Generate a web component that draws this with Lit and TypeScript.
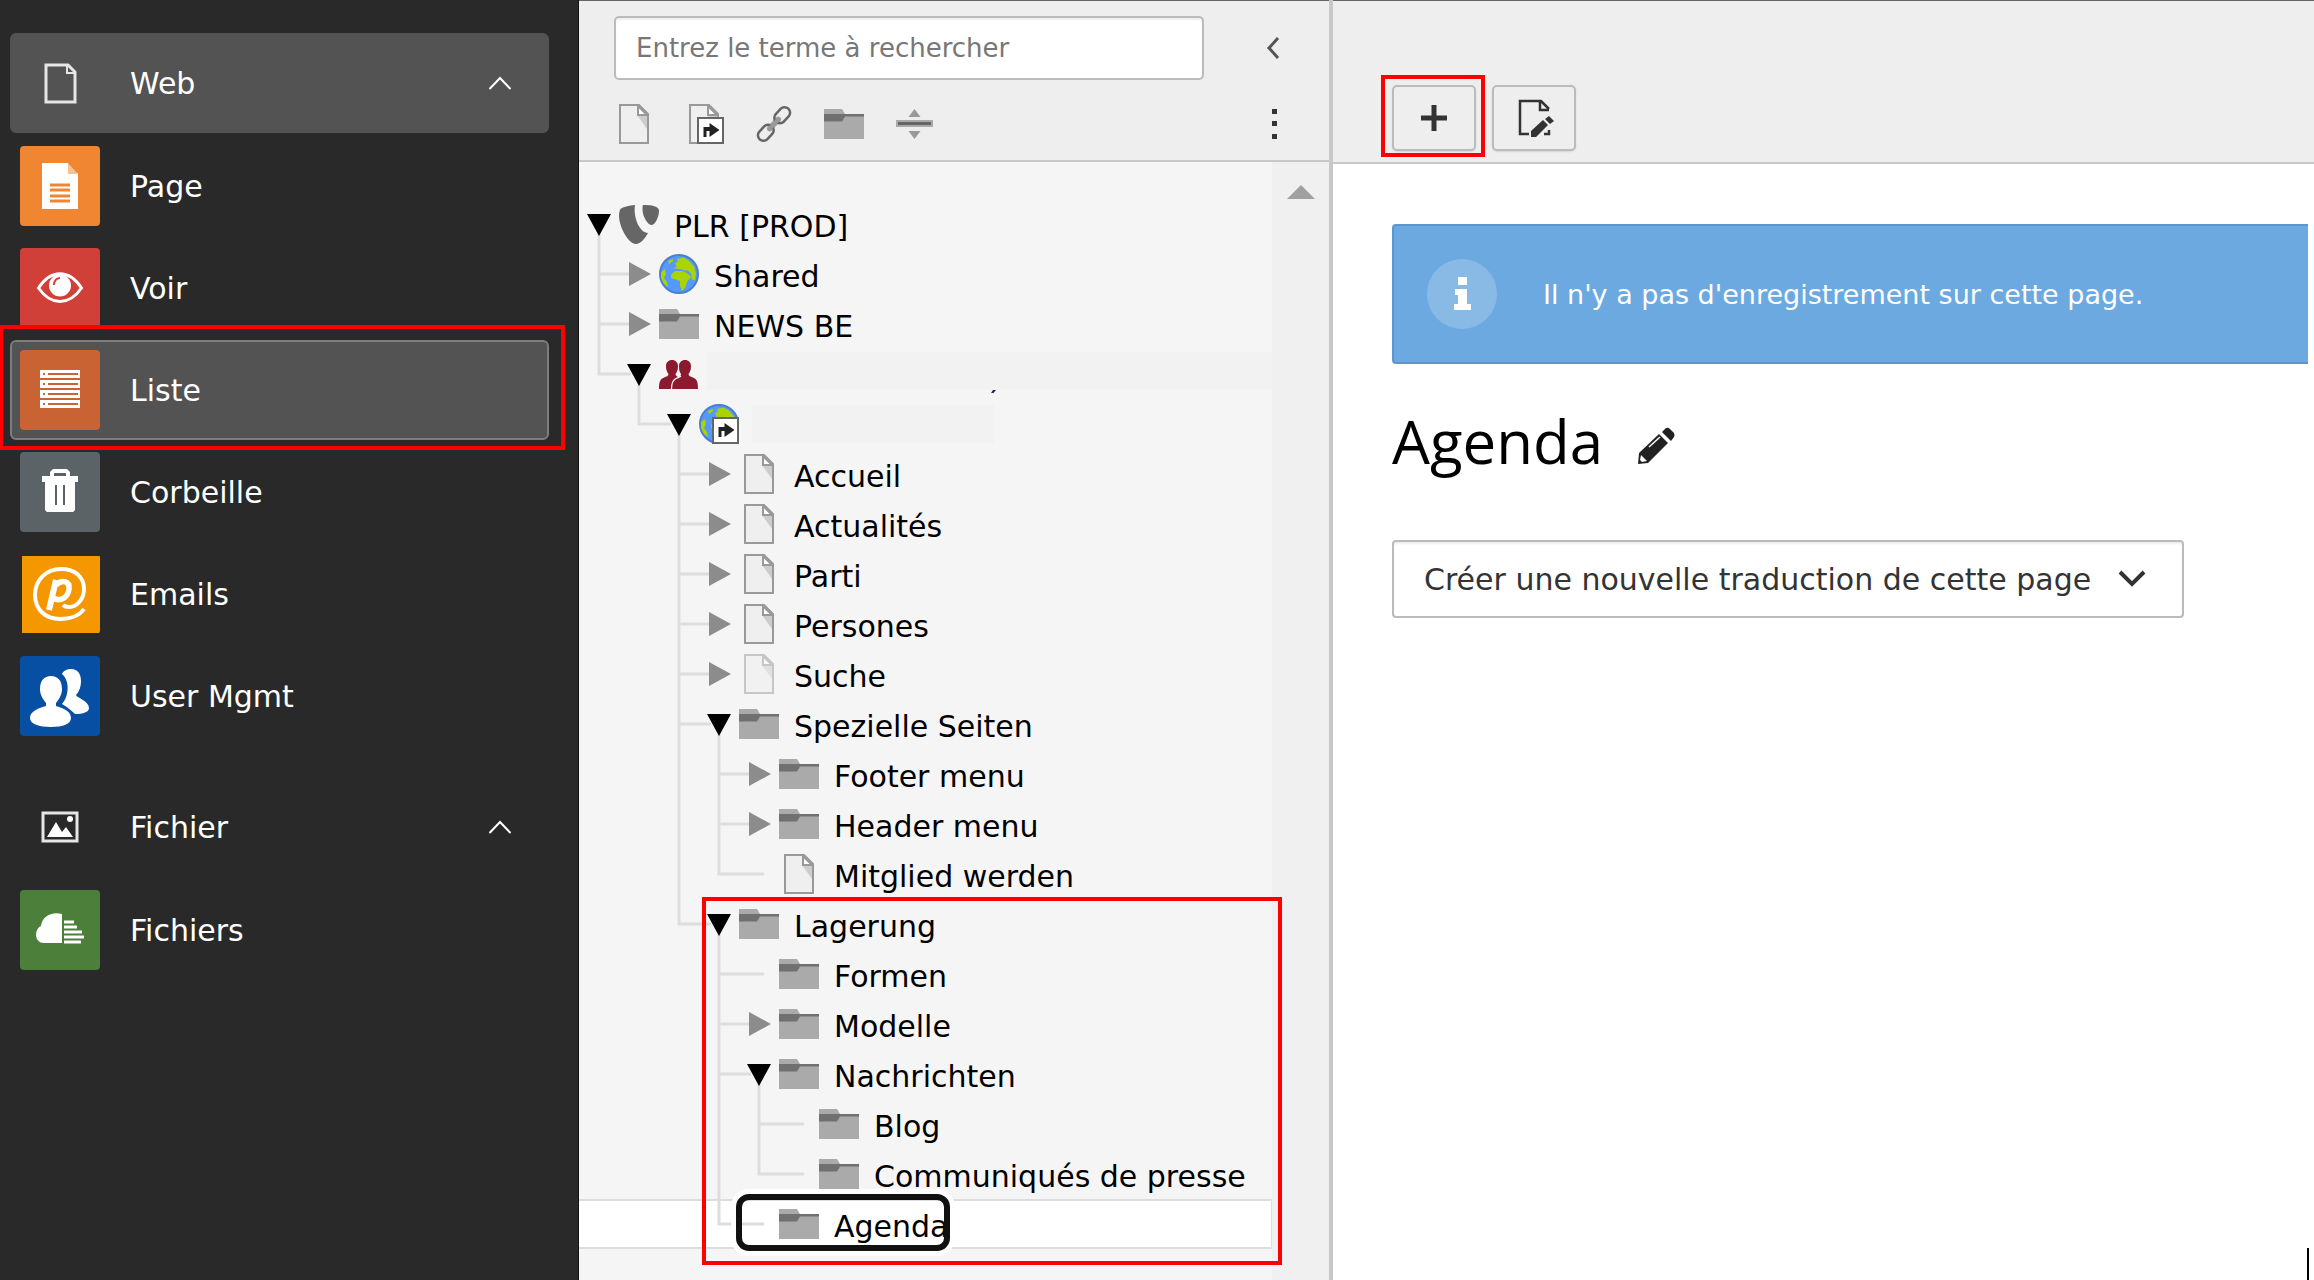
import { LitElement, html, css, svg, nothing } from "lit";
import { customElement } from "lit/decorators.js";

type IconName =
  | "typo3" | "globe" | "globeLink" | "folder" | "users" | "page" | "pageHidden"
  | "pageLink" | "link" | "divider";

interface TreeNode {
  label: string;
  icon: IconName;
  open?: boolean;
  children?: TreeNode[];
  masked?: "wide" | "short";
  selected?: boolean;
  marked?: boolean;
}

interface ModuleItem {
  label: string;
  color: string;
  icon: unknown;
  active?: boolean;
  inset?: boolean;
}

const pageShape = svg`
  <path d="M6 1h19l9 9v29H6z" fill="#efefef" stroke="#999" stroke-width="2"/>
  <path d="M23 11l10 14V11z" fill="#ccc"/>
  <path d="M24 2v9h9z" fill="#fff" stroke="#999" stroke-width="2"/>`;

const globeShape = svg`
  <circle cx="20" cy="20" r="19" fill="#5599ff" stroke="#4a7fd0" stroke-width="2"/>
  <path d="M18 5l6-1.500 6 3 5 6 2 7-1 7-3-1-1-6-3-3-4 0-3-3-4 0-2-4 3-2z" fill="#aad400"/>
  <path d="M12 21l4-4 7 0 5 2 4 4-4 5-2 6-3 3-2-5 0-5-6-2-3-1z" fill="#aad400"/>
  <path d="M2 18l4-3 1 5-2 4 3 4 1 5-4-3-3-6zM9 7l5-2 0 2-4 3z" fill="#aad400"/>
  <path d="M14 14l6-2 6 2-1 2z" fill="#aad400"/>`;

const shortcut = svg`
  <rect x="14" y="14" width="25" height="25" fill="#fff" stroke="#666" stroke-width="2"/>
  <path d="M19.500 33v-10h6v-4l10 7-10 7v-6h-3v6z" fill="#222"/>`;

const ICONS: Record<IconName, unknown> = {
  typo3: svg`<path d="M16 1C10 1.500 4 3 1.500 5 .5 6.500 0 9 0 12c0 10 9 28 17 28 4 0 8-4 12-11-8 0-15-15-13-28z" fill="#666"/>
    <path d="M24 1c9 0 16 1 16 6 0 6-4 14-7.500 14S23.500 13 23.500 5c0-2 0-3 .5-4z" fill="#666"/>`,
  globe: globeShape,
  globeLink: svg`${globeShape}${shortcut}`,
  folder: svg`<path d="M0 5h18l3 5h19v25H0z" fill="#aaa"/><path d="M0 10h40v2.500H21l-3 5H0z" fill="#707070"/>`,
  users: svg`<path d="M13 6c3.500 0 6 2.500 6 6 0 4-1 6-2.500 8 0 2 3 3 5 4.500 2 2 3 6 3 10.500H0c0-7 1-10 5-11.500 2.500-1 4.500-1.500 4.500-3.500C8 18 7 16 7 12c0-3.500 2.500-6 6-6z" fill="#8c1a2e"/>
    <path d="M26 6c3.500 0 6 2.500 6 6 0 4-1 6-2.500 8 0 2 2 2.500 4.500 3.500 4 1.500 5 4.500 5 11.500H12.500c0-5 1-8.500 3.500-10 2.500-1.500 6-2 6-5-1.500-2-2-4-2-8 0-3.500 2.500-6 6-6z" fill="#8c1a2e"/>
    <path d="M12.500 35c0-6 1.500-9 4.500-10.500 2-1 4-1.500 5-2.500" fill="none" stroke="#f5f5f5" stroke-width="1.300"/>`,
  page: pageShape,
  pageHidden: svg`<g opacity=".5">${pageShape}</g>`,
  pageLink: svg`${pageShape}${shortcut}`,
  link: svg`<g transform="rotate(43 20 20)" fill="none">
    <path d="M20 14v12" stroke="#aaa" stroke-width="6" stroke-linecap="round"/>
    <rect x="14.500" y="-1" width="11" height="18" rx="5.500" stroke="#666" stroke-width="2.500"/>
    <rect x="14.500" y="23" width="11" height="18" rx="5.500" stroke="#666" stroke-width="2.500"/>
    <path d="M20 13v14" stroke="#999" stroke-width="4" stroke-linecap="round"/></g>`,
  divider: svg`<path d="M2 16h37v7H2z" fill="#aaa"/><path d="M4 18h33v3H4z" fill="#666"/>
    <path d="M20.500 5l6 8h-12zM20.500 35l6-8h-12z" fill="#999"/>`,
};

const icon = (name: IconName) => html`<svg class="icon" viewBox="0 0 40 40" aria-hidden="true">${ICONS[name]}</svg>`;

const WEB_MODULES: ModuleItem[] = [
  {
    label: "Page", color: "#f08532",
    icon: svg`<path d="M22 17h26v10h10v36H22z" fill="#fff"/><path d="M48 17l10 11H48z" fill="#f7c196"/>
      <path d="M30 39h20M30 44h20M30 50h20M30 55h20" stroke="#f08532" stroke-width="3"/>`,
  },
  {
    label: "Voir", color: "#d13f39",
    icon: svg`<path d="M18.500 40C31 21 49 21 61.500 40 49 58 31 58 18.500 40z" fill="none" stroke="#fff" stroke-width="3"/>
      <circle cx="40" cy="37.500" r="11" fill="#fff"/>
      <path d="M34 37c0-4 2-6.500 6-7" fill="none" stroke="#d13f39" stroke-width="2"/>`,
  },
  {
    label: "Liste", color: "#c96333", active: true,
    icon: svg`${[20, 30, 40, 50].map((y) => svg`<rect x="20" y=${y} width="40" height="8" fill="#fff"/>
      <rect x="23" y=${y + 3} width="2" height="2" fill="#c96333"/><rect x="28" y=${y + 3} width="30" height="2" fill="#c96333"/>`)}`,
  },
  {
    label: "Corbeille", color: "#5c6366",
    icon: svg`<path d="M22 24h8v-4l3-3h14l3 3v4h8v6h-3v28l-2 2H27l-2-2V30h-3zM34 24h12v-3H34z" fill="#fff" fill-rule="evenodd"/>
      <path d="M36 33v20M44 33v20" stroke="#5c6366" stroke-width="2"/>`,
  },
  {
    label: "Emails", color: "#f49700", inset: true,
    icon: svg`<path d="M64 55C60 61 51 65 40 65 25 65 15 55 15 41 15 26 26 15 41 15c14 0 23 8 23 20 0 10-7 18-15 18-3 0-5-1-6-2" fill="none" stroke="#fff" stroke-width="4"/>
      <path d="M36 26l-7 30" stroke="#fff" stroke-width="6"/>
      <path d="M36 31c6-6 14-4 13 4-1 9-9 13-16 9" fill="none" stroke="#fff" stroke-width="5.500"/>`,
  },
  {
    label: "User Mgmt", color: "#074fa3",
    icon: svg`<path d="M42 18c1-3 5-5 9-5 7 0 10 5 10 12 0 6-2 11-5 14 1 3 13 6 13 13 0 4-6 6-14 6-3-3-9-8-13-10 6-6 9-22 0-30z" fill="#fff"/>
      <path d="M31 20c7 0 11 5 11 13 0 6-3 10-6 14v3c5 2 15 4 15 12 0 6-8 9-20 9S10 68 10 62c0-7 9-10 16-12v-3c-3-4-6-8-6-14 0-8 4-13 11-13z" fill="#fff"/>`,
  },
];

const FILE_MODULES: ModuleItem[] = [
  {
    label: "Fichiers", color: "#4b7f3a",
    icon: svg`<path d="M42 24c-10-3-20 2-21 12-7 3-7 17 3 17h18z" fill="#fff"/>
      <path d="M44 32h10M44 37h13M44 42h18M44 47h20M44 52h17" stroke="#fff" stroke-width="3"/>`,
  },
];

const TREE: TreeNode[] = [
  {
    label: "PLR [PROD]", icon: "typo3", open: true, children: [
      { label: "Shared", icon: "globe", children: [] },
      { label: "NEWS BE", icon: "folder", children: [] },
      {
        label: "", icon: "users", open: true, masked: "wide", children: [
          {
            label: "", icon: "globeLink", open: true, masked: "short", children: [
              { label: "Accueil", icon: "page", children: [] },
              { label: "Actualités", icon: "page", children: [] },
              { label: "Parti", icon: "page", children: [] },
              { label: "Persones", icon: "page", children: [] },
              { label: "Suche", icon: "pageHidden", children: [] },
              {
                label: "Spezielle Seiten", icon: "folder", open: true, children: [
                  { label: "Footer menu", icon: "folder", children: [] },
                  { label: "Header menu", icon: "folder", children: [] },
                  { label: "Mitglied werden", icon: "page" },
                ],
              },
              {
                label: "Lagerung", icon: "folder", open: true, marked: true, children: [
                  { label: "Formen", icon: "folder" },
                  { label: "Modelle", icon: "folder", children: [] },
                  {
                    label: "Nachrichten", icon: "folder", open: true, children: [
                      { label: "Blog", icon: "folder" },
                      { label: "Communiqués de presse", icon: "folder" },
                    ],
                  },
                  { label: "Agenda", icon: "folder", selected: true },
                ],
              },
            ],
          },
        ],
      },
    ],
  },
];

@customElement("module-menu")
export class ModuleMenu extends LitElement {
  static styles = css`
    :host { display: block; background: #292929; border-right: 1px solid #111; }
    nav { padding: 33px 29px 0 10px; }
    .group + .group { margin-top: 31px; }
    ul { list-style: none; margin: 3px 0 0; padding: 0; display: flex; flex-direction: column; gap: 2px; }
    li { position: relative; }
    .row {
      box-sizing: border-box; width: 100%; height: 100px; padding: 0 35px 0 8px;
      display: flex; align-items: center; gap: 30px;
      border: 2px solid transparent; border-radius: 6px; background: none;
      color: #fff; font: 30px "DejaVu Sans", sans-serif; text-decoration: none; text-align: left;
    }
    .row.current { background: #535353; border-color: #535353; }
    .row.active { background: #535353; border-color: #7d7d7d; }
    .tile { width: 80px; height: 80px; flex: none; border-radius: 4px; }
    .label { flex: 1; }
    .caret { width: 24px; height: 16px; flex: none; }
    .marker { position: absolute; inset: -15px -16px -10px -11px; border: 4px solid #f00; pointer-events: none; }
  `;

  private group(label: string, glyph: unknown, items: ModuleItem[], current: boolean) {
    return html`
      <div class="group">
        <button class="row ${current ? "current" : ""}" aria-expanded="true">
          <svg class="tile" viewBox="0 0 80 80" aria-hidden="true">${glyph}</svg>
          <span class="label">${label}</span>
          <svg class="caret" viewBox="0 0 24 16" aria-hidden="true">
            <path d="M1.500 14L12 3l10.500 11" fill="none" stroke="#fff" stroke-width="2"/>
          </svg>
        </button>
        <ul>
          ${items.map((m) => html`
            <li>
              <a class="row ${m.active ? "active" : ""}" href="#">
                <svg class="tile" viewBox="0 0 80 80" aria-hidden="true">
                  ${m.inset
                    ? svg`<rect x="2" y="2" width="78" height="77" fill=${m.color}/>`
                    : svg`<rect width="80" height="80" fill=${m.color}/>`}${m.icon}
                </svg>
                <span class="label">${m.label}</span>
              </a>
              ${m.active ? html`<div class="marker"></div>` : nothing}
            </li>`)}
        </ul>
      </div>`;
  }

  render() {
    return html`
      <nav aria-label="Modules">
        ${this.group("Web", svg`<path d="M26 22h22l7 7v30H26z" fill="none" stroke="#e6e6e6" stroke-width="3"/>
          <path d="M47 22v8h8" fill="none" stroke="#e6e6e6" stroke-width="2"/>`, WEB_MODULES, true)}
        ${this.group("Fichier", svg`<rect x="23" y="26" width="34" height="28" fill="none" stroke="#e6e6e6" stroke-width="3"/>
          <path d="M27 50l9-15 6 10 4-5 7 10z" fill="#fff"/><circle cx="50" cy="32" r="3" fill="#fff"/>`, FILE_MODULES, false)}
      </nav>`;
  }
}

@customElement("page-tree")
export class PageTree extends LitElement {
  static styles = css`
    :host {
      display: flex; flex-direction: column; background: #f5f5f5;
      border-right: 4px solid #c8c8c8; font-family: "DejaVu Sans", sans-serif; color: #000;
    }
    .head { background: #eee; border-bottom: 2px solid #c8c8c8; padding: 16px 36px 16px 35px; box-shadow: inset 0 1px #666; }
    .line { display: flex; align-items: center; justify-content: space-between; }
    .search {
      box-sizing: border-box; width: 590px; height: 64px; padding: 0 20px;
      border: 2px solid #bbb; border-radius: 5px; background: #fff;
      box-shadow: inset 0 2px 2px rgba(0, 0, 0, 0.07); font: 26px "DejaVu Sans", sans-serif; color: #333;
    }
    .search::placeholder { color: #777; opacity: 1; }
    .plain { display: flex; padding: 0; border: 0; background: none; }
    .tools { display: flex; gap: 30px; margin-top: 24px; }
    .icon { width: 40px; height: 40px; flex: none; display: block; overflow: visible; }
    .body { flex: 1; display: flex; }
    .tree { flex: 1; min-width: 0; padding-top: 37px; }
    .scroll { width: 57px; background: #f0f0f0; display: flex; justify-content: center; padding-top: 23px; }
    .scroll svg { width: 28px; height: 14px; }
    .branch { position: relative; }
    .node { position: relative; height: 50px; display: flex; align-items: center; }
    .selected { background: #fff; box-shadow: inset 0 2px #ddd, inset 0 -2px #ddd, inset -1px 0 #ddd; }
    .cell { width: 40px; height: 50px; flex: none; display: block; }
    .label { margin-left: 15px; padding-top: 6px; font-size: 30px; line-height: 40px; white-space: nowrap; color: #000; text-decoration: none; }
    .mask { background: #f2f2f2; height: 38px; margin-left: 13px; }
    .mask.wide { position: relative; flex: 1; margin-left: 8px; margin-bottom: 6px; }
    .mask.short { width: 242px; }
    .speck { position: absolute; left: 284px; top: 38px; width: 5px; height: 3px; }
    .marker { position: absolute; inset: -2px -10px -16px 123px; border: 4px solid #f00; pointer-events: none; }
    .ring {
      position: absolute; left: 157px; top: -5px; width: 202px; height: 45px;
      border: 6px solid #111; border-radius: 13px; box-shadow: 0 0 0 5px #fff; pointer-events: none;
    }
  `;

  private renderNodes(nodes: TreeNode[], trail: boolean[]): unknown {
    return nodes.map((n, i) => this.renderNode(n, trail, i === nodes.length - 1));
  }

  private renderMask(kind: "wide" | "short") {
    return html`<span class="mask ${kind}">${kind === "wide"
      ? html`<svg class="speck" viewBox="0 0 5 3" aria-hidden="true"><path d="M2 0h3L2.500 3H0z" fill="#1b2a55"/></svg>`
      : nothing}</span>`;
  }

  private renderNode(n: TreeNode, trail: boolean[], last: boolean): unknown {
    const depth = trail.length;
    const toggle = n.children
      ? n.open
        ? svg`<path d="M20 25v25" stroke="#ddd" stroke-width="3"/><path d="M8 15h24L20 37z" fill="#000"/>`
        : svg`<path d="M10 13v24l22-12z" fill="#8c8c8c"/>`
      : nothing;
    const reach = n.children ? 12 : 25;
    const row = html`
      <div class="node ${n.selected ? "selected" : ""}" role="treeitem" aria-selected=${n.selected ? "true" : "false"}>
        ${trail.map((on, i) => {
          const own = i === depth - 1;
          const d = own ? (last ? "M20 0v25h20" : "M20 0v50M20 25h20") : on ? "M20 0v50" : "";
          return html`<svg class="cell" viewBox="0 0 40 50"><path d=${d} fill="none" stroke="#ddd" stroke-width="3"/></svg>`;
        })}
        <svg class="cell" viewBox="0 0 40 50">
          ${depth ? svg`<path d="M0 25h${reach}" stroke="#ddd" stroke-width="3"/>` : nothing}${toggle}
        </svg>
        ${icon(n.icon)}
        ${n.masked ? this.renderMask(n.masked) : html`<a class="label" href="#">${n.label}</a>`}
        ${n.selected ? html`<span class="ring"></span>` : nothing}
      </div>`;
    const childTrail = depth === 0 ? [true] : [...trail.slice(0, -1), !last, true];
    const kids = n.children?.length ? this.renderNodes(n.children, childTrail) : nothing;
    return n.marked
      ? html`<div class="branch">${row}${kids}<div class="marker"></div></div>`
      : html`${row}${kids}`;
  }

  render() {
    const tools: [IconName, string][] = [
      ["page", "Page"], ["pageLink", "Raccourci"], ["link", "Lien"], ["folder", "Dossier"], ["divider", "Séparateur"],
    ];
    return html`
      <div class="head">
        <div class="line">
          <input class="search" type="search" aria-label="Entrez le terme à rechercher" placeholder="Entrez le terme à rechercher">
          <button class="plain" aria-label="Replier">
            <svg class="icon" viewBox="0 0 40 40"><path d="M25 10l-9 10 9 10" fill="none" stroke="#555" stroke-width="3"/></svg>
          </button>
        </div>
        <div class="line">
          <div class="tools">
            ${tools.map(([name, label]) => html`<button class="plain" aria-label=${label}>${icon(name)}</button>`)}
          </div>
          <button class="plain tools" aria-label="Options">
            <svg class="icon" viewBox="0 0 40 40"><path d="M19 5h5v5h-5zM19 17h5v5h-5zM19 30h5v5h-5z" fill="#333"/></svg>
          </button>
        </div>
      </div>
      <div class="body">
        <div class="tree" role="tree">${this.renderNodes(TREE, [])}</div>
        <div class="scroll"><svg viewBox="0 0 28 14"><path d="M14 0l14 14H0z" fill="#a0a0a0"/></svg></div>
      </div>`;
  }
}

@customElement("record-list")
export class RecordList extends LitElement {
  static styles = css`
    :host { display: block; position: relative; background: #fff; font-family: "DejaVu Sans", sans-serif; min-width: 0; }
    .head {
      box-sizing: border-box; height: 164px; background: #eee; border-bottom: 2px solid #c8c8c8;
      padding: 0 59px 11px; display: flex; align-items: flex-end; gap: 16px; box-shadow: inset 0 1px #666;
    }
    .slot { position: relative; display: flex; }
    .btn {
      box-sizing: border-box; width: 84px; height: 66px; padding: 0; border: 2px solid #bbb; border-radius: 5px;
      background: #eee; display: flex; align-items: center; justify-content: center;
      box-shadow: 0 1px 2px rgba(0, 0, 0, 0.1);
    }
    .btn svg { width: 40px; height: 40px; }
    .marker { position: absolute; inset: -10px -9px -6px -11px; border: 4px solid #f00; pointer-events: none; }
    .content { padding: 60px 6px 0 59px; }
    .info {
      box-sizing: border-box; height: 140px; padding-left: 33px; display: flex; align-items: center; gap: 46px;
      background: #6ca9e0; border: 2px solid #5a97cf; border-right: 0; border-radius: 4px 0 0 4px; color: #fff;
    }
    .info svg { width: 70px; height: 70px; flex: none; }
    .info p { margin: 0; font-size: 27px; }
    .title { display: flex; align-items: center; gap: 34px; margin: 36px 0 58px; }
    h1 { margin: 0; font: 60px/82px "Open Sans", sans-serif; color: #000; }
    .edit { display: flex; padding: 10px 0 0; border: 0; background: none; }
    .edit svg { width: 38px; height: 38px; }
    .pick { position: relative; display: inline-flex; align-items: center; }
    select {
      appearance: none; box-sizing: border-box; height: 78px; padding: 0 90px 0 30px; border: 2px solid #bbb; border-radius: 4px;
      background: #fff; color: #333; font: 30px "DejaVu Sans", sans-serif;
      box-shadow: inset 0 2px 2px rgba(0, 0, 0, 0.07);
    }
    .arrow { position: absolute; right: 38px; width: 28px; height: 20px; pointer-events: none; }
    .edge { position: absolute; right: 5px; bottom: 0; width: 2px; height: 32px; background: #000; }
  `;

  render() {
    return html`
      <div class="head">
        <div class="slot">
          <button class="btn" aria-label="Créer">
            <svg viewBox="0 0 40 40"><path d="M20 7v26M7 20h26" stroke="#333" stroke-width="5"/></svg>
          </button>
          <div class="marker"></div>
        </div>
        <button class="btn" aria-label="Modifier la page">
          <svg viewBox="0 0 40 40">
            <path d="M15 36H6V3h21l8 8M30 36h5v-4" fill="none" stroke="#333" stroke-width="2.500"/>
            <path d="M26 3v9h9" fill="none" stroke="#333" stroke-width="2.500"/>
            <path d="M17 39v-6l12-11 5 5-12 12zM31 21l4-3 5 5-4 3z" fill="#333"/>
          </svg>
        </button>
      </div>
      <div class="content">
        <div class="info" role="status">
          <svg viewBox="0 0 70 70" aria-hidden="true">
            <circle cx="35" cy="35" r="35" fill="#fff" opacity=".2"/>
            <path d="M31 18h9v8h-9zM28 30h12v15h4v6H27v-6h4v-9h-3z" fill="#fff"/>
          </svg>
          <p>Il n'y a pas d'enregistrement sur cette page.</p>
        </div>
        <div class="title">
          <h1>Agenda</h1>
          <button class="edit" aria-label="Modifier le titre">
            <svg viewBox="0 0 38 38">
              <path d="M1 37l1-11L22 7l9 9-20 20zM25 5l4-4q2-1 4 1l4 4q1 2 0 4l-3 4z" fill="#222"/>
              <path d="M4 28l6 6-5 1-2-2z" fill="#fff"/>
              <path d="M12 20L23 10" stroke="#fff" stroke-width="1.500"/>
            </svg>
          </button>
        </div>
        <div class="pick">
          <select aria-label="Créer une nouvelle traduction de cette page">
            <option>Créer une nouvelle traduction de cette page</option>
          </select>
          <svg class="arrow" viewBox="0 0 28 20" aria-hidden="true">
            <path d="M2 3l12 12L26 3" fill="none" stroke="#333" stroke-width="4"/>
          </svg>
        </div>
      </div>
      <div class="edge"></div>`;
  }
}

@customElement("app-root")
export class AppRoot extends LitElement {
  static styles = css`
    :host { display: block; }
    .shell { display: grid; grid-template-columns: 579px 754px minmax(0, 1fr); min-height: 100vh; }
  `;

  render() {
    return html`
      <main class="shell">
        <module-menu></module-menu>
        <page-tree></page-tree>
        <record-list></record-list>
      </main>`;
  }
}
